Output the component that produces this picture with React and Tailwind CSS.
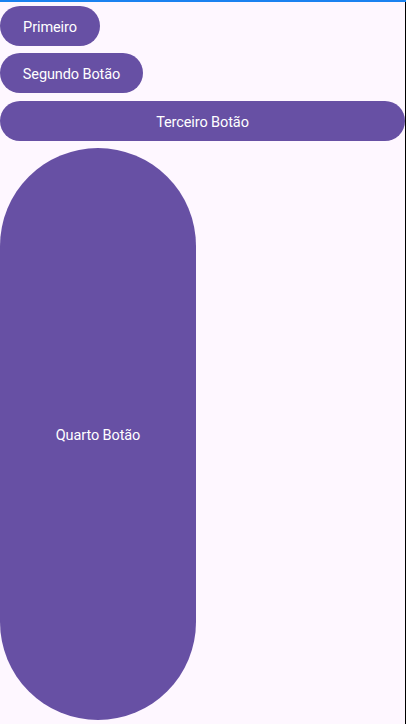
export default function App() {
  const btn = "flex items-center justify-center rounded-full bg-[#6750a4] text-white text-[14.5px] font-[450] tracking-[-0.1px] pt-[3px]";
  return (
    <div className="w-[406px] h-[724px] bg-[#fef7ff] flex flex-col overflow-hidden" style={{ fontFamily: "Roboto, 'Noto Sans', sans-serif" }}>
      <div className="h-[2px] w-full bg-[#1a82f0] shrink-0" />
      <div className="flex flex-1 min-h-0">
        <div className="flex-1 flex flex-col items-start pt-[4px]">
          <button className={`${btn} h-[40px] w-[100px]`}>Primeiro</button>
          <button className={`${btn} h-[40px] w-[143px] mt-[7px]`}>Segundo Botão</button>
          <button className={`${btn} h-[40px] w-[405px] mt-[8px] relative z-10`}>Terceiro Botão</button>
          <button className={`${btn} h-[572px] w-[196px] mt-[7px]`}>Quarto Botão</button>
        </div>
        <div className="w-[1px] bg-black shrink-0" />
      </div>
    </div>
  );
}
